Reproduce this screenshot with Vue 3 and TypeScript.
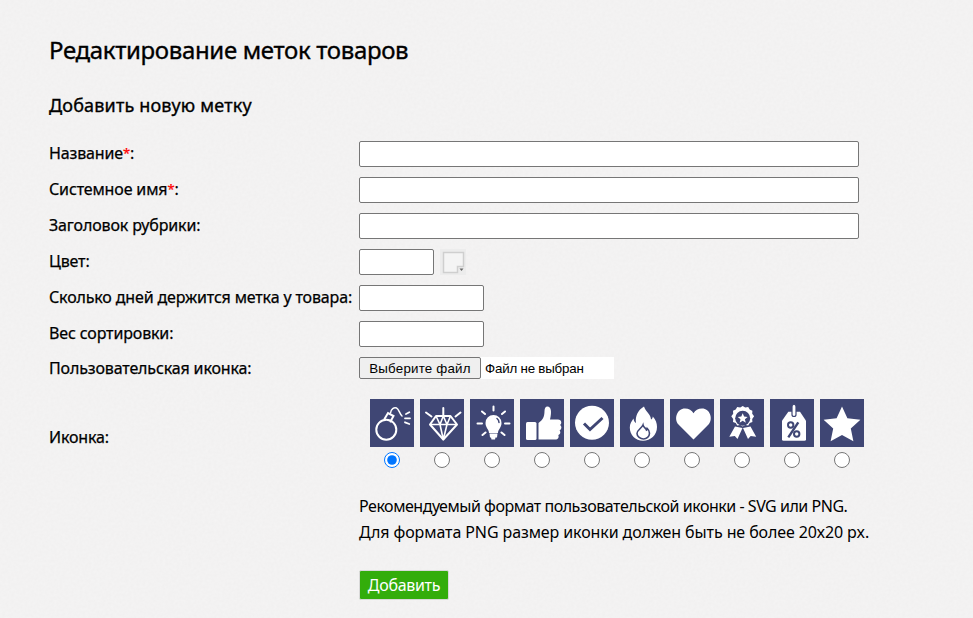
<script setup lang="ts">
const icons = [0, 1, 2, 3, 4, 5, 6, 7, 8, 9]
</script>

<template>
  <main class="page">
    <h1 class="title">Редактирование меток товаров</h1>
    <h2 class="subtitle">Добавить новую метку</h2>
    <form class="form" @submit.prevent>
      <div class="row">
        <label class="label">Название<span class="req">*</span>:</label>
        <input class="input wide" type="text" />
      </div>
      <div class="row">
        <label class="label">Системное имя<span class="req">*</span>:</label>
        <input class="input wide" type="text" />
      </div>
      <div class="row">
        <label class="label">Заголовок рубрики:</label>
        <input class="input wide" type="text" />
      </div>
      <div class="row">
        <label class="label">Цвет:</label>
        <input class="input color" type="text" />
        <span class="swatch">
          <svg width="26" height="26" viewBox="0 0 26 26">
            <rect width="26" height="26" fill="#ececec" />
            <path d="M3.500 3.500h20v14h-6v6h-14z" fill="#f4f4f4" stroke="#cfcfcf" stroke-width="1.500" />
            <path d="M19.500 19.500h4l-2 2.500z" fill="#666" />
          </svg>
        </span>
      </div>
      <div class="row">
        <label class="label">Сколько дней держится метка у товара:</label>
        <input class="input mid" type="text" />
      </div>
      <div class="row">
        <label class="label">Вес сортировки:</label>
        <input class="input mid" type="text" />
      </div>
      <div class="row file-row">
        <label class="label file-label">Пользовательская иконка:</label>
        <div class="file">
          <button class="file-btn" type="button">Выберите файл</button>
          <span class="file-name">Файл не выбран</span>
        </div>
      </div>
      <div class="row icons-row">
        <label class="label icons-label">Иконка:</label>
        <div class="icons">
          <label v-for="i in icons" :key="i" class="icon-cell">
            <svg class="tile" width="44" height="48" viewBox="0 0 44 48">
              <rect width="44" height="48" fill="#3f4674" />
              <g v-if="i === 0" fill="none" stroke="#fff" stroke-width="2" stroke-linecap="round">
                <circle cx="16.300" cy="30.700" r="10" />
                <path d="M14.500 20l3.500-6 5.500 3-3 5.500" />
                <path d="M20.500 14c.5-4 3.500-6 6-5 2.500 1 3 6 5.500 8" stroke-width="1.500" />
                <path d="M36 15l3.300-1.700M35 19.300h5M35 23.300l4.300 1.700" stroke-width="1.800" />
              </g>
              <g v-else-if="i === 1" fill="none" stroke="#fff" stroke-width="1.600" stroke-linejoin="round">
                <path d="M16 17h14.500l6.500 8.500-13.700 15-13.300-15z" stroke-width="2" />
                <path d="M10 25.500h27M16 17l4 8.500 3.300 15 3.700-15 3.500-8.500M20 25.500l3.300-8.500 3.700 8.500" />
                <path d="M23.300 9v7M6 13.500l5.500 4M40.500 13.500l-5 4" stroke-width="2" stroke-linecap="round" />
              </g>
              <g v-else-if="i === 2" fill="none" stroke="#fff" stroke-width="2" stroke-linecap="round">
                <path d="M19 34c0-4-3.500-5-3.500-10a8 8 0 0 1 16 0c0 5-3.500 6-3.500 10z" fill="#fff" stroke="none" />
                <path d="M27 19.500a5 5 0 0 1 2 4" stroke="#3f4674" stroke-width="1.500" />
                <path d="M19.500 34.500h8l-.5 4h-1.500l-.5 2h-3.500l-.5-2h-1z" fill="#fff" stroke="none" />
                <path d="M23.500 7.500v4M12 12.500l3 2.500M35 12.500l-3 2.500M7.500 24.500h4.500M35 24.500h4.500M12.500 36l3-2.500M34.500 36l-3-2.500" />
              </g>
              <g v-else-if="i === 3" fill="#fff">
                <rect x="6" y="23" width="10.500" height="18" rx="1.500" />
                <path d="M18.500 40.500V24c4-3 6-6 6-12 0-2.500 1-4.500 3-4.500 3.500 0 4.500 5 2.500 13h8c4 0 4 4.500 2 5.500 2 1 1.800 4.500-.5 5.500 1.500 1.500.8 4-1.200 4.500 1 2.500-.3 4.500-3 4.500z" />
              </g>
              <g v-else-if="i === 4">
                <circle cx="22" cy="23.800" r="17" fill="#fff" />
                <path d="M14 24.500l6 6 12.500-11.500" fill="none" stroke="#3f4674" stroke-width="3" />
              </g>
              <g v-else-if="i === 5">
                <path d="M24 7.500c1.500 5 7 8 7 13 1.200-.5 1.800-2 1.800-3 3 3 4.200 7 4.200 10.500 0 8-6.500 13.800-14 13.800S9.800 36 9.800 28.500c0-4 2-6.500 3.700-9 .3 2 1 3.500 2.500 4.500-1-7 2-13 8-16.500z" fill="#fff" />
                <path d="M23 26c.5 2.500 3 3 3.500 5 .5-.3.800-.8.800-1.500 1.700 1.500 2.200 3.300 2.200 4.800 0 3.500-3 5.700-6 5.700s-6.500-2.200-6.500-5.500c0-3.500 4.500-5 6-8.500z" fill="#fff" stroke="#3f4674" stroke-width="1.600" />
              </g>
              <path v-else-if="i === 6" d="M23.500 40.500L8.500 25.500C3.500 20 7 9.500 15 9.500c3.800 0 6.800 1.800 8.500 4.800 1.700-3 4.700-4.800 8.500-4.800 8 0 11.500 10.500 6.500 16z" fill="#fff" />
              <g v-else-if="i === 7">
                <path d="M15 27.500l-5.700 10.300 5.500-.8 2.700 3 5-11zM30.500 27.500l5.700 10.300-5.500-.8-2.700 3-5-11z" fill="#fff" />
                <path d="M22.700 7l2.500 1.500 3-.5 1.500 2.500 2.700 1.200-.2 3 1.900 2.600-1.900 2.600.2 3-2.700 1.200-1.500 2.500-3-.5-2.500 1.500-2.500-1.500-3 .5-1.500-2.500-2.700-1.200.2-3-1.900-2.600 1.900-2.600-.2-3 2.700-1.200 1.500-2.500 3 .5z" fill="#fff" />
                <circle cx="22.700" cy="19.300" r="7.500" fill="#3f4674" />
                <path d="M22.700 14.300l1.400 3.300 3.500.3-2.700 2.300.9 3.500-3.100-1.900-3.100 1.900.9-3.500-2.700-2.300 3.500-.3z" fill="#fff" />
              </g>
              <g v-else-if="i === 8">
                <path d="M18.300 12.700h11.700l6 9v18.500a1.500 1.500 0 0 1-1.500 1.500h-21a1.500 1.500 0 0 1-1.500-1.500V21.700z" fill="#fff" />
                <rect x="22" y="5.500" width="4" height="12" rx="2" fill="#fff" stroke="#3f4674" stroke-width="1.200" />
                <path d="M28.300 23.300l-10 15" stroke="#3f4674" stroke-width="2.400" fill="none" />
                <circle cx="20.700" cy="26" r="2.700" fill="none" stroke="#3f4674" stroke-width="2" />
                <circle cx="26.700" cy="35" r="2.700" fill="none" stroke="#3f4674" stroke-width="2" />
              </g>
              <path v-else d="M22 7.500l5.400 11.700 13 1.500-9.600 8.800 2.600 12.800L22 35.900l-11.400 6.400 2.600-12.800-9.600-8.800 13-1.500z" fill="#fff" />
            </svg>
            <input class="radio" type="radio" name="icon" :checked="i === 0" />
          </label>
        </div>
      </div>
      <div class="note">
        <span class="note-a">Рекомендуемый формат пользовательской иконки - SVG или PNG.</span><br />
        <span class="note-b">Для формата PNG размер иконки должен быть не более 20х20 px.</span>
      </div>
      <button class="submit" type="submit">Добавить</button>
    </form>
  </main>
</template>

<style>
html, body { margin: 0; background: #f2f1f1; }
</style>

<style scoped>
.page {
  box-sizing: border-box;
  width: 973px;
  height: 618px;
  overflow: hidden;
  padding: 34px 0 0 49px;
  font-family: "Noto Sans", sans-serif;
  color: #000;
  background-color: #f1f0f0;
  background-image: url("data:image/svg+xml,%3Csvg xmlns='http://www.w3.org/2000/svg' width='300' height='300'%3E%3Cfilter id='n'%3E%3CfeTurbulence type='fractalNoise' baseFrequency='0.35' numOctaves='3' stitchTiles='stitch'/%3E%3CfeColorMatrix values='0 0 0 0 1 0 0 0 0 1 0 0 0 0 1 0.6 0 0 0 -0.1'/%3E%3C/filter%3E%3Crect width='300' height='300' filter='url(%23n)' opacity='0.55'/%3E%3C/svg%3E");
}
.title {
  margin: 0;
  font-size: 24px;
  line-height: 32px;
  font-weight: 400;
  letter-spacing: -0.34px;
  -webkit-text-stroke: 0.35px #000;
}
.subtitle {
  margin: 27px 0 0;
  font-size: 18px;
  line-height: 24px;
  font-weight: 400;
  letter-spacing: 0.17px;
  -webkit-text-stroke: 0.35px #000;
}
.form {
  margin-top: 24px;
  display: flex;
  flex-direction: column;
  gap: 10px;
}
.row {
  display: flex;
  align-items: center;
}
.label {
  width: 310px;
  flex: none;
  padding-bottom: 2px;
  font-size: 16px;
  line-height: 20px;
  letter-spacing: -0.14px;
  -webkit-text-stroke: 0.25px #000;
  white-space: nowrap;
}
.file-label { padding-bottom: 0; }
.icons-label { padding-bottom: 0; position: relative; top: 3px; }
.req {
  color: #f00;
  font-size: 13px;
  line-height: 0;
  vertical-align: 1px;
  -webkit-text-stroke: 0.25px #f00;
}
.input {
  box-sizing: border-box;
  height: 26px;
  margin: 0;
  padding: 1px 2px;
  background: #fff;
  border: 1px solid #767676;
  border-radius: 2px;
}
.wide { width: 500px; }
.color { width: 75px; }
.mid { width: 125px; }
.swatch {
  display: block;
  width: 26px;
  height: 26px;
  margin-left: 6px;
}
.swatch svg { display: block; }
.file {
  display: flex;
  align-items: center;
  width: 255px;
  height: 22px;
  background: #fff;
  font-family: "Liberation Sans", sans-serif;
  font-size: 13.333px;
}
.file-btn {
  box-sizing: border-box;
  width: 122px;
  height: 22px;
  padding: 0;
  background: #efefef;
  border: 1px solid #767676;
  border-radius: 2px;
  color: #000;
  font: inherit;
  letter-spacing: 0.2px;
}
.file-name { margin-left: 4px; letter-spacing: -0.2px; }
.icons-row { margin-top: 10px; }
.icons { display: flex; gap: 6px; padding-left: 11px; }
.icon-cell {
  width: 44px;
  display: flex;
  flex-direction: column;
  align-items: center;
}
.tile { display: block; }
.radio {
  width: 16px;
  height: 16px;
  margin: 5px 0 0;
  accent-color: #0075ff;
}
.note {
  margin: 15px 0 0 310px;
  font-size: 16px;
  line-height: 26px;
  white-space: nowrap;
}
.note-a { letter-spacing: -0.47px; }
.note-b { letter-spacing: -0.1px; }
.submit {
  box-sizing: border-box;
  width: 90px;
  height: 30px;
  margin: 15px 0 0 310px;
  padding: 0;
  background: #33ad0b;
  border: 1px solid #d9d9d9;
  border-radius: 2px;
  color: #fff;
  font-family: "Noto Sans", sans-serif;
  font-size: 16px;
  letter-spacing: -0.3px;
}
</style>
